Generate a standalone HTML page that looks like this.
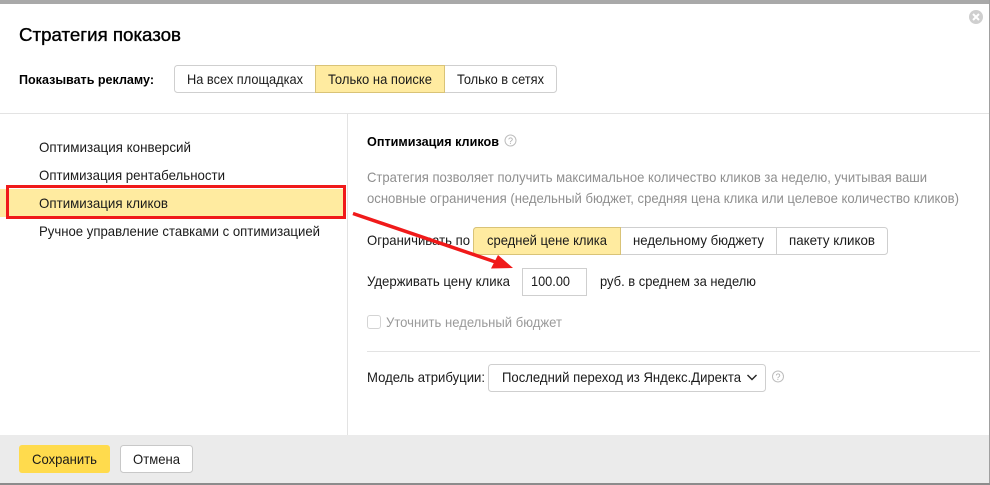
<!DOCTYPE html>
<html lang="ru">
<head>
<meta charset="utf-8">
<title>Стратегия показов</title>
<style>
html,body{margin:0;padding:0;background:#fff;width:990px;height:485px;overflow:hidden}
svg{display:block}
text{font-family:"Liberation Sans",sans-serif;font-size:14px;fill:#1a1a1a}
.g{fill:#8f8f8f}
.gl{fill:#9a9a9a}
.b{font-weight:bold;font-size:13px;fill:#000}
</style>
</head>
<body>
<svg width="990" height="485" viewBox="0 0 990 485" xmlns="http://www.w3.org/2000/svg">
<rect width="990" height="485" fill="#fff"/>
<rect x="0" y="0" width="990" height="4" fill="#a9a9a9"/>
<rect x="989" y="0" width="1" height="485" fill="#a0a0a0"/>

<circle cx="976" cy="17" r="7" fill="#cfcfcf"/>
<path d="M973 14l6 6M979 14l-6 6" stroke="#fff" stroke-width="2"/>

<text x="19" y="41" style="font-size:18px;stroke:#000;stroke-width:.35;fill:#000" textLength="162" lengthAdjust="spacingAndGlyphs">Стратегия показов</text>
<text x="19" y="84" class="b" textLength="135" lengthAdjust="spacingAndGlyphs">Показывать рекламу:</text>

<rect x="174.500" y="65.500" width="382" height="27" rx="3" fill="#fff" stroke="#cfcfcf"/>
<rect x="315.500" y="65.500" width="129" height="27" fill="#ffeba0" stroke="#d9c377"/>
<text x="187" y="84" textLength="116" lengthAdjust="spacingAndGlyphs">На всех площадках</text>
<text x="328" y="84" textLength="104" lengthAdjust="spacingAndGlyphs">Только на поиске</text>
<text x="457" y="84" textLength="87" lengthAdjust="spacingAndGlyphs">Только в сетях</text>

<rect x="0" y="113" width="989" height="1" fill="#e3e3e3"/>
<rect x="347" y="113" width="1" height="322" fill="#e3e3e3"/>

<rect x="0" y="189" width="345" height="28" fill="#ffeba0"/>
<text x="39" y="152" textLength="152" lengthAdjust="spacingAndGlyphs">Оптимизация конверсий</text>
<text x="39" y="180" textLength="186" lengthAdjust="spacingAndGlyphs">Оптимизация рентабельности</text>
<text x="39" y="208" textLength="129" lengthAdjust="spacingAndGlyphs">Оптимизация кликов</text>
<text x="39" y="236" textLength="281" lengthAdjust="spacingAndGlyphs">Ручное управление ставками с оптимизацией</text>
<rect x="7.500" y="186.500" width="337" height="31" fill="none" stroke="#f01a1a" stroke-width="3"/>

<text x="367" y="146" class="b" textLength="132" lengthAdjust="spacingAndGlyphs">Оптимизация кликов</text>
<circle cx="510.500" cy="140.500" r="5.500" fill="none" stroke="#bdbdbd"/>
<text x="510.500" y="144" text-anchor="middle" style="font-size:9px;fill:#aaa">?</text>

<text x="367" y="182" class="g" textLength="560" lengthAdjust="spacingAndGlyphs">Стратегия позволяет получить максимальное количество кликов за неделю, учитывая ваши</text>
<text x="367" y="203" class="g" textLength="592" lengthAdjust="spacingAndGlyphs">основные ограничения (недельный бюджет, средняя цена клика или целевое количество кликов)</text>

<text x="367" y="245" textLength="103" lengthAdjust="spacingAndGlyphs">Ограничивать по</text>
<rect x="473.500" y="227.500" width="414" height="27" rx="3" fill="#fff" stroke="#cfcfcf"/>
<path d="M620.500 227.500H476.500a3 3 0 0 0-3 3v21a3 3 0 0 0 3 3H620.500z" fill="#ffeba0" stroke="#d9c377"/>
<rect x="776" y="228" width="1" height="26" fill="#cfcfcf"/>
<text x="487" y="245" textLength="120" lengthAdjust="spacingAndGlyphs">средней цене клика</text>
<text x="633" y="245" textLength="131" lengthAdjust="spacingAndGlyphs">недельному бюджету</text>
<text x="789" y="245" textLength="86" lengthAdjust="spacingAndGlyphs">пакету кликов</text>

<text x="367" y="286" textLength="143" lengthAdjust="spacingAndGlyphs">Удерживать цену клика</text>
<rect x="522.500" y="268.500" width="64" height="27" fill="#fff" stroke="#cfcfcf"/>
<text x="531" y="286" textLength="39" lengthAdjust="spacingAndGlyphs">100.00</text>
<text x="600" y="286" textLength="156" lengthAdjust="spacingAndGlyphs">руб. в среднем за неделю</text>

<rect x="367.500" y="315.500" width="13" height="13" rx="2.500" fill="#fff" stroke="#d4d4d4"/>
<text x="386" y="327" class="gl" textLength="176" lengthAdjust="spacingAndGlyphs">Уточнить недельный бюджет</text>

<rect x="367" y="351" width="613" height="1" fill="#e3e3e3"/>

<text x="367" y="382" textLength="118" lengthAdjust="spacingAndGlyphs">Модель атрибуции:</text>
<rect x="488.500" y="364.500" width="277" height="27" rx="3" fill="#fff" stroke="#cfcfcf"/>
<text x="502" y="382" textLength="239" lengthAdjust="spacingAndGlyphs">Последний переход из Яндекс.Директа</text>
<path d="M747.500 375l4.500 4.500 4.500-4.500" fill="none" stroke="#222" stroke-width="1.400"/>
<circle cx="778" cy="376.500" r="5.500" fill="none" stroke="#bdbdbd"/>
<text x="778" y="380" text-anchor="middle" style="font-size:9px;fill:#aaa">?</text>

<rect x="0" y="435" width="989" height="48" fill="#ebebeb"/>
<rect x="0" y="483" width="990" height="2" fill="#8c8c8c"/>
<rect x="19" y="445" width="91" height="28" rx="3" fill="#ffdb4d"/>
<text x="32" y="464" textLength="65" lengthAdjust="spacingAndGlyphs">Сохранить</text>
<rect x="120.500" y="445.500" width="72" height="27" rx="3" fill="#fff" stroke="#c8c8c8"/>
<text x="133" y="464" textLength="47" lengthAdjust="spacingAndGlyphs">Отмена</text>

<path d="M353 213.500L497 262.500" stroke="#f01a1a" stroke-width="3.500" fill="none"/>
<path d="M513 268L491 268.500L498 255z" fill="#f01a1a"/>
</svg>
</body>
</html>
